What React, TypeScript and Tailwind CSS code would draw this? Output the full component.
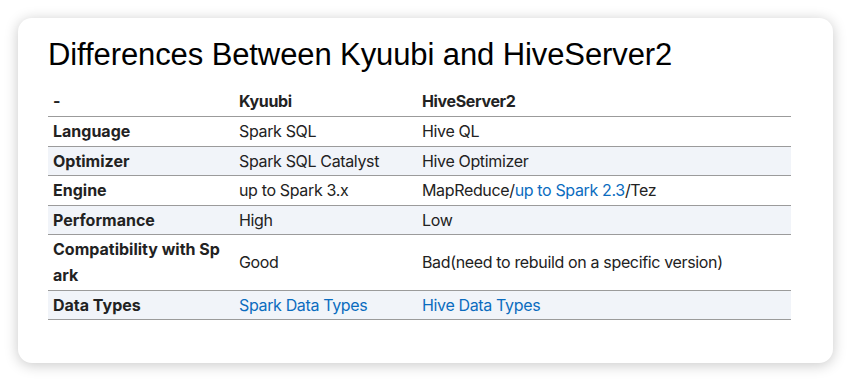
import React from 'react'

type Cell = { text: string; link?: boolean }[]

interface Row {
  name: string
  kyuubi: Cell
  hive: Cell
}

const rows: Row[] = [
  { name: 'Language', kyuubi: [{ text: 'Spark SQL' }], hive: [{ text: 'Hive QL' }] },
  { name: 'Optimizer', kyuubi: [{ text: 'Spark SQL Catalyst' }], hive: [{ text: 'Hive Optimizer' }] },
  {
    name: 'Engine',
    kyuubi: [{ text: 'up to Spark 3.x' }],
    hive: [{ text: 'MapReduce/' }, { text: 'up to Spark 2.3', link: true }, { text: '/Tez' }],
  },
  { name: 'Performance', kyuubi: [{ text: 'High' }], hive: [{ text: 'Low' }] },
  {
    name: 'Compatibility with Spark',
    kyuubi: [{ text: 'Good' }],
    hive: [{ text: 'Bad(need to rebuild on a specific version)' }],
  },
  {
    name: 'Data Types',
    kyuubi: [{ text: 'Spark Data Types', link: true }],
    hive: [{ text: 'Hive Data Types', link: true }],
  },
]

const renderCell = (cell: Cell) =>
  cell.map((part, i) =>
    part.link ? (
      <a key={i} href="#" className="text-[#0b6cbf]">
        {part.text}
      </a>
    ) : (
      <span key={i}>{part.text}</span>
    )
  )

export default function App() {
  return (
    <div className="w-[851px] h-[382px] bg-white p-[18px]">
      <div className="w-[815px] h-[345px] rounded-[14px] bg-white shadow-[0_2px_14px_rgba(0,0,0,0.22)] pl-[30px] pt-[17px]">
        <h1 className="text-[31px] leading-[40px] text-black font-['Liberation_Sans',Arial,sans-serif] tracking-[-0.1px]">
          Differences Between Kyuubi and HiveServer2
        </h1>

        <table className="mt-[11px] w-[743px] table-fixed border-collapse text-[16px] leading-[26px] tracking-[-0.35px] text-[#222] font-['Inter','Noto_Sans',sans-serif]">
          <colgroup>
            <col className="w-[186px]" />
            <col className="w-[183px]" />
            <col className="w-[374px]" />
          </colgroup>
          <thead>
            <tr className="border-b border-[#9b9b9b]">
              <th className="text-left font-bold px-[5px] py-[2px]">-</th>
              <th className="text-left font-bold px-[5px] py-[2px]">Kyuubi</th>
              <th className="text-left font-bold px-[5px] py-[2px]">HiveServer2</th>
            </tr>
          </thead>
          <tbody>
            {rows.map((row, i) => (
              <tr
                key={row.name}
                className={`border-b border-[#9b9b9b] ${i % 2 === 1 ? 'bg-[#f1f4f9]' : 'bg-white'}`}
              >
                <td className="font-bold tracking-normal px-[5px] py-[1.25px] break-all">{row.name}</td>
                <td className="px-[5px] py-[1.25px]">{renderCell(row.kyuubi)}</td>
                <td className="px-[5px] py-[1.25px]">{renderCell(row.hive)}</td>
              </tr>
            ))}
          </tbody>
        </table>
      </div>
    </div>
  )
}
